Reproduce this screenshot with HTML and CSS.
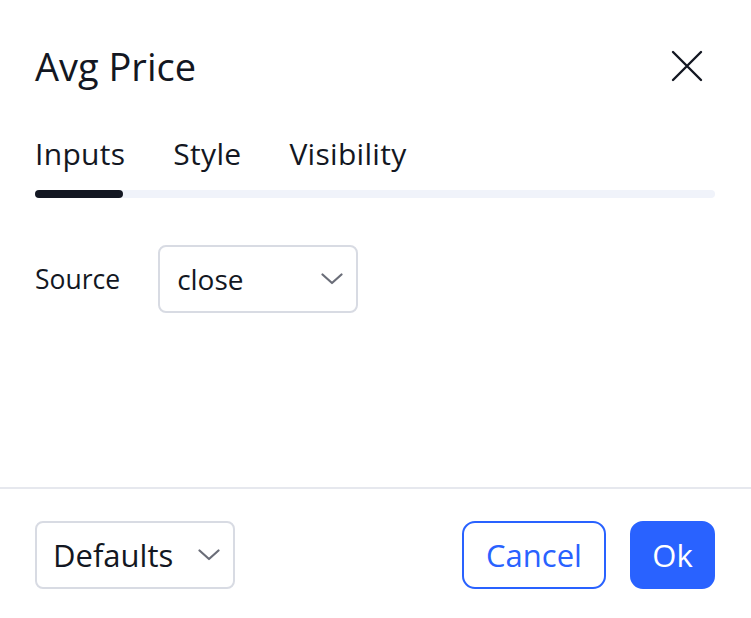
FILE: index.html
```html
<!DOCTYPE html>
<html>
<head>
<meta charset="utf-8">
<link rel="stylesheet" href="styles.css">
</head>
<body>
<div class="dialog">
  <div class="header">
    <div class="title">Avg Price</div>
    <button class="close" aria-label="Close">
      <svg width="32" height="32" viewBox="0 0 32 32"><path d="M2 2L30 30M30 2L2 30" stroke="#131722" stroke-width="2.4" stroke-linecap="round" fill="none"/></svg>
    </button>
  </div>
  <div class="tabs">
    <div class="tab-row">
      <div class="tab active">Inputs</div>
      <div class="tab">Style</div>
      <div class="tab">Visibility</div>
    </div>
    <div class="track"><div class="indicator"></div></div>
  </div>
  <div class="content">
    <div class="field">
      <div class="label">Source</div>
      <div class="select source">
        <span>close</span>
        <svg class="chev" width="22" height="12" viewBox="0 0 22 12"><path d="M1.5 1.5L11 10L20.5 1.5" stroke="#6a6d78" stroke-width="2.2" stroke-linecap="round" stroke-linejoin="round" fill="none"/></svg>
      </div>
    </div>
  </div>
  <div class="footer">
    <div class="select defaults">
      <span>Defaults</span>
      <svg class="chev" width="22" height="12" viewBox="0 0 22 12"><path d="M1.5 1.5L11 10L20.5 1.5" stroke="#6a6d78" stroke-width="2.2" stroke-linecap="round" stroke-linejoin="round" fill="none"/></svg>
    </div>
    <div class="actions">
      <button class="btn cancel">Cancel</button>
      <button class="btn ok">Ok</button>
    </div>
  </div>
</div>
</body>
</html>
```
FILE: styles.css
```css
html, body {
  margin: 0;
  padding: 0;
  background: #ffffff;
}
body {
  font-family: "Open Sans", "Noto Sans", sans-serif;
  color: #131722;
  width: 751px;
  height: 618px;
  overflow: hidden;
}
.dialog {
  display: flex;
  flex-direction: column;
  height: 618px;
}
.header {
  display: flex;
  align-items: center;
  justify-content: space-between;
  padding: 38px 46px 0 35px;
  height: 56px;
}
.title {
  font-size: 38px;
  line-height: 56px;
  font-weight: 400;
}
.close {
  border: 0;
  background: none;
  padding: 0;
  width: 36px;
  height: 36px;
  display: flex;
  align-items: center;
  justify-content: center;
}
.tabs {
  padding: 0 36px 0 35px;
  margin-top: 38px;
}
.tab-row {
  display: flex;
  gap: 48px;
}
.tab {
  font-size: 30px;
  line-height: 44px;
  letter-spacing: 0.3px;
}
.track {
  margin-top: 14px;
  height: 8px;
  border-radius: 4px;
  background: #f0f3fa;
}
.indicator {
  width: 88px;
  height: 8px;
  border-radius: 4px;
  background: #131722;
}
.content {
  flex: 1;
  padding: 47px 36px 0 35px;
}
.field {
  display: flex;
  align-items: center;
  gap: 38px;
}
.label {
  font-size: 26.5px;
}
.select {
  box-sizing: border-box;
  width: 200px;
  height: 68px;
  border: 2px solid #d8dbe3;
  border-radius: 8px;
  display: flex;
  align-items: center;
  justify-content: space-between;
  padding: 0 13px 0 17px;
  font-size: 28px;
}
.defaults {
  font-size: 31px;
  padding-left: 16px;
}
.footer {
  border-top: 2px solid #e6e8ee;
  padding: 32px 36px 29px 35px;
  display: flex;
  align-items: center;
  justify-content: space-between;
}
.actions {
  display: flex;
  gap: 24px;
}
.btn {
  box-sizing: border-box;
  height: 68px;
  border-radius: 13px;
  font-family: inherit;
  font-size: 31px;
  padding: 0;
  border: 2px solid #2962ff;
}
.cancel {
  width: 144px;
  background: #ffffff;
  color: #2962ff;
}
.ok {
  width: 85px;
  background: #2962ff;
  color: #ffffff;
}
```
